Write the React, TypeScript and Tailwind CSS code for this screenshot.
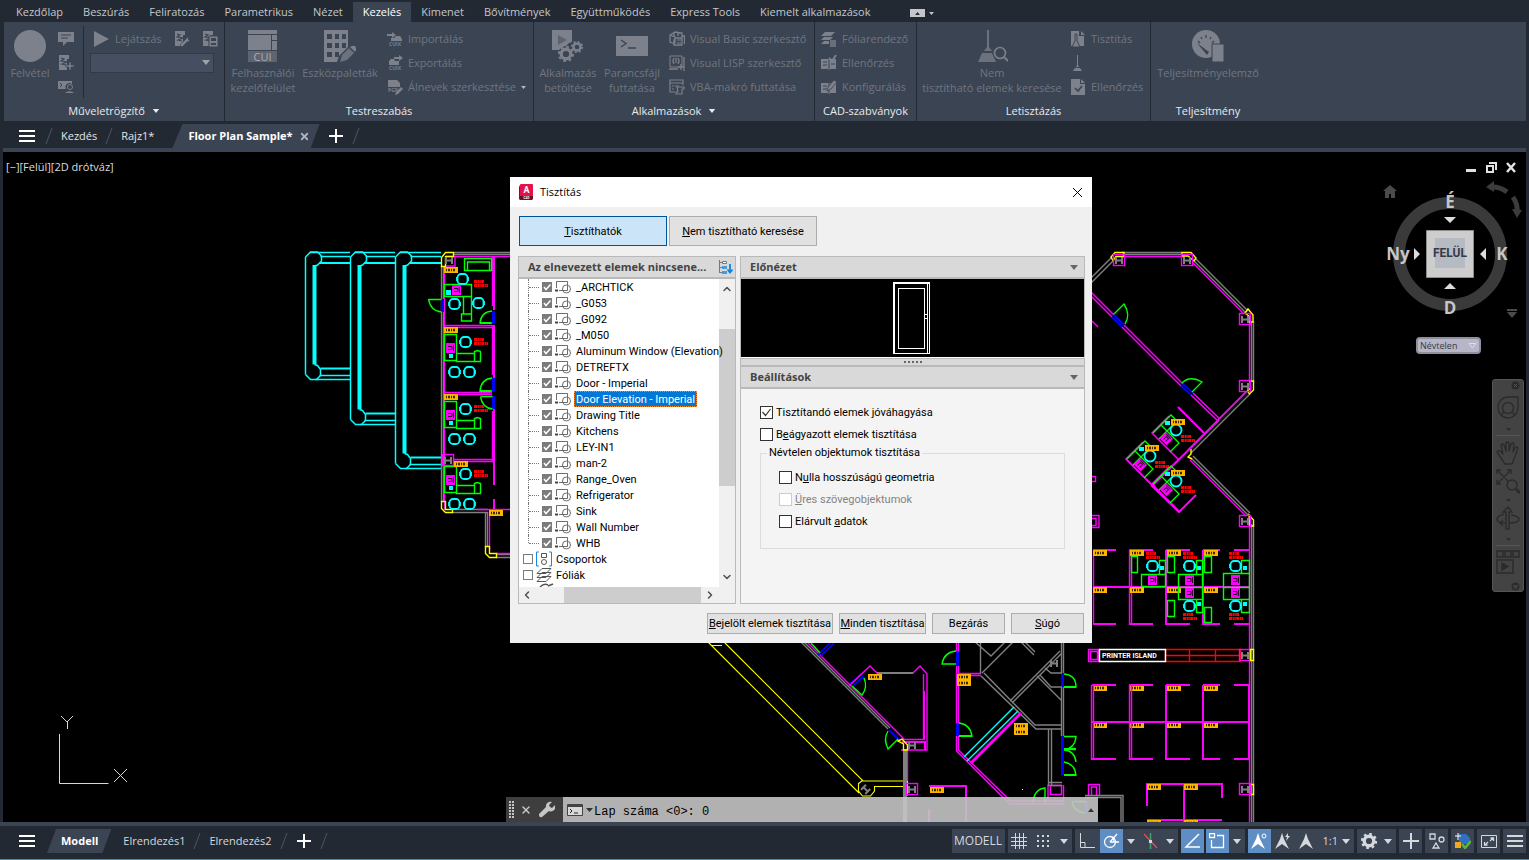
import type { ReactNode } from "react";
import { ChevronDown, ChevronLeft, ChevronRight, ChevronUp, X } from "lucide-react";

const menuTabs = [
  "Kezdőlap",
  "Beszúrás",
  "Feliratozás",
  "Parametrikus",
  "Nézet",
  "Kezelés",
  "Kimenet",
  "Bővítmények",
  "Együttműködés",
  "Express Tools",
  "Kiemelt alkalmazások",
];

const blocks = [
  "_ARCHTICK",
  "_G053",
  "_G092",
  "_M050",
  "Aluminum Window (Elevation)",
  "DETREFTX",
  "Door - Imperial",
  "Door Elevation - Imperial",
  "Drawing Title",
  "Kitchens",
  "LEY-IN1",
  "man-2",
  "Range_Oven",
  "Refrigerator",
  "Sink",
  "Wall Number",
  "WHB",
];

const M = "#ff00ff";
const G = "#00ff00";
const C = "#00ffff";
const Y = "#ffff00";
const W = "#808080";
const B = "#0000ff";

function Icon({ size = 16, children }: { size?: number; children: ReactNode }) {
  return (
    <svg
      width={size}
      height={size}
      viewBox={`0 0 ${size} ${size}`}
      fill="currentColor"
      className="shrink-0"
      aria-hidden="true"
    >
      {children}
    </svg>
  );
}

function Caret({ className = "" }: { className?: string }) {
  return (
    <svg width="8" height="5" viewBox="0 0 8 5" fill="currentColor" className={className} aria-hidden="true">
      <path d="M0 0h8L4 5z" />
    </svg>
  );
}

/* ---------- ribbon ---------- */

function BigButton({ icon, label, className = "" }: { icon: ReactNode; label: ReactNode; className?: string }) {
  return (
    <button disabled className={`flex flex-col items-center gap-[3px] pt-2 text-center ${className}`}>
      <span className="text-[#7c818b]">{icon}</span>
      <span className="leading-[15px] whitespace-nowrap">{label}</span>
    </button>
  );
}

function SmallButton({ icon, label, caret }: { icon: ReactNode; label?: string; caret?: boolean }) {
  return (
    <button disabled className="flex h-6 items-center gap-[5px] whitespace-nowrap">
      <span className="text-[#7c818b]">{icon}</span>
      {label}
      {caret && <Caret className="h-[3px] w-[5px] text-[#b4b8bf]" />}
    </button>
  );
}

function Panel({
  title,
  caret,
  className,
  children,
}: {
  title: string;
  caret?: boolean;
  className: string;
  children: ReactNode;
}) {
  return (
    <section className={`flex shrink-0 flex-col border-r border-[#222933] ${className}`}>
      <div className="flex h-[78px]">{children}</div>
      <h2 className="flex h-[21px] items-center justify-center gap-[7px] pt-px text-[#e8eaed]">
        {title}
        {caret && <Caret className="h-1 w-2" />}
      </h2>
    </section>
  );
}

const Gear = ({ x, y, r }: { x: number; y: number; r: number }) => (
  <g>
    <circle cx={x} cy={y} r={r * 0.6} fill="none" stroke="currentColor" strokeWidth={r * 0.42} />
    <circle
      cx={x}
      cy={y}
      r={r * 0.88}
      fill="none"
      stroke="currentColor"
      strokeWidth={r * 0.28}
      strokeDasharray={`${r * 0.34} ${r * 0.351}`}
    />
  </g>
);

function ScriptIcon({ kind }: { kind: "edit" | "plus" | "box" }) {
  return (
    <Icon>
      <path d="M1 0h10v4H9v11H1z" />
      <path d="M3 3l3 1-3 2 6 1-5 2 4 1" fill="none" stroke="#3b4453" strokeWidth="1.2" />
      {kind === "plus" && <path d="M8 10h3V7h2v3h3v2h-3v3h-2v-3H8z" stroke="#3b4453" strokeWidth=".6" />}
      {kind === "edit" && <path d="M6 14l6-6a3 3 0 0 1 3-2l-1 2 1 1 1-1a3 3 0 0 1-3 3l-5 5z" stroke="#3b4453" strokeWidth=".6" />}
      {kind === "box" && (
        <>
          <path d="M7 5h9v11H7z" stroke="#3b4453" />
          <path d="M9 7h5v3H9zM9 12h5v2H9z" fill="#3b4453" />
        </>
      )}
    </Icon>
  );
}

function Ribbon() {
  return (
    <div className="ml-1 mr-[3px] flex h-[99px] overflow-hidden bg-[#3b4453] text-[11px] text-[#6f7681]">
      <Panel title="Műveletrögzítő" caret className="w-[221px]">
        <div className="flex w-[79px]">
          <BigButton
            className="w-[52px]"
            icon={
              <Icon size={32}>
                <circle cx="16" cy="16" r="16" />
              </Icon>
            }
            label="Felvétel"
          />
          <div className="flex flex-col pt-[5px] pl-[2px]">
            <SmallButton
              icon={
                <Icon>
                  <path d="M0 1h16v10H9l-4 4v-4H0z" />
                  <path d="M3 4h10M3 7h7" stroke="#3b4453" />
                </Icon>
              }
            />
            <SmallButton icon={<ScriptIcon kind="plus" />} />
            <SmallButton
              icon={
                <Icon>
                  <path d="M0 2h14v3a4 4 0 0 0-6 5H0z" />
                  <path d="M2 4l2 2-2 2" fill="none" stroke="#3b4453" />
                  <circle cx="12" cy="8" r="2.5" fill="#3b4453" stroke="currentColor" />
                  <path d="M7 14a5 3 0 0 1 9 0z" />
                </Icon>
              }
            />
          </div>
        </div>
        <div className="mt-1 h-[72px] w-px bg-[#222933]" />
        <div className="flex flex-1 flex-col px-[6px] pt-[5px]">
          <div className="flex items-center justify-between pl-1">
            <SmallButton
              icon={
                <Icon>
                  <path d="M0 0l15 8L0 16z" />
                </Icon>
              }
              label="Lejátszás"
            />
            <div className="flex gap-3">
              <SmallButton icon={<ScriptIcon kind="edit" />} />
              <SmallButton icon={<ScriptIcon kind="box" />} />
            </div>
          </div>
          <div className="relative mt-[2px] mr-1">
            <select
              disabled
              aria-label="Művelet"
              className="block h-5 w-full appearance-none border border-[#313a48] bg-[#464f62] opacity-100"
            />
            <Caret className="pointer-events-none absolute top-[7px] right-1 text-[#9da2ab]" />
          </div>
        </div>
      </Panel>

      <Panel title="Testreszabás" className="w-[309px]">
        <BigButton
          className="w-[76px]"
          icon={
            <Icon size={32}>
              <path d="M1 0h29v4H1zM1 5h23v15H1zM25 5h5v5h-5zM25 11h5v9h-5z" />
              <path d="M1 21h29v11H1z" opacity=".55" />
              <text x="15.5" y="30.5" textAnchor="middle" fontSize="11" fill="#a8acb3">
                CUI
              </text>
            </Icon>
          }
          label={
            <>
              Felhasználói
              <br />
              kezelőfelület
            </>
          }
        />
        <BigButton
          className="w-[78px]"
          icon={
            <Icon size={32}>
              <path
                fillRule="evenodd"
                d="M0 0h24v17l-9 9-2 6H0zM3 4v5h5V4zm8 0v5h4V4zm7 0v5h4V4zM3 13v5h5v-5zm8 0v5h4v-5zm7 0v5h4v-5zM3 22v5h5v-5zm8 0v5h4v-5z"
              />
              <path d="M16 32l2-7 7-7 5 5-7 7z" opacity=".75" />
              <path d="M26 17l2-1a3 3 0 0 1 4 4l-1 2z" />
            </Icon>
          }
          label="Eszközpaletták"
        />
        <div className="flex flex-col pt-[5px] pl-2">
          <SmallButton
            icon={
              <Icon>
                <path d="M0 3h5V1l4 3-4 3V5H0zM4 9V7h3l2-2h4l2 3v2H4z" />
                <text x="8" y="15" textAnchor="middle" fontSize="5" fontWeight="700">
                  CUIX
                </text>
              </Icon>
            }
            label="Importálás"
          />
          <SmallButton
            icon={
              <Icon>
                <path d="M7 2h5V0l4 3-4 3V4H7zM2 10V6l2-2h3l1 2h4v4z" />
                <text x="8" y="15" textAnchor="middle" fontSize="5" fontWeight="700">
                  CUIX
                </text>
              </Icon>
            }
            label="Exportálás"
          />
          <SmallButton
            icon={
              <Icon>
                <path d="M1 1h9l3 3v4H1z" />
                <text x="6" y="13" textAnchor="middle" fontSize="5" fontWeight="700">
                  PGP
                </text>
                <path d="M8 16l1-3 5-5 2 2-5 5z" />
              </Icon>
            }
            label="Álnevek szerkesztése"
            caret
          />
        </div>
      </Panel>

      <Panel title="Alkalmazások" caret className="w-[281px]">
        <BigButton
          className="w-[68px]"
          icon={
            <Icon size={32}>
              <path d="M0 0h20v12l-3 1-3 3-4 1-3 3H0z" />
              <path d="M6 5l9 5-9 5z" fill="#5d6470" />
              <Gear x={14} y={24} r={8} />
              <Gear x={25} y={17} r={6} />
            </Icon>
          }
          label={
            <>
              Alkalmazás
              <br />
              betöltése
            </>
          }
        />
        <BigButton
          className="w-[60px]"
          icon={
            <Icon size={32}>
              <path d="M0 6h32v20H0z" />
              <path d="M5 10l5 3.500-5 3.500M12 18h8" fill="none" stroke="#3b4453" strokeWidth="1.4" />
            </Icon>
          }
          label={
            <>
              Parancsfájl
              <br />
              futtatása
            </>
          }
        />
        <div className="flex flex-col pt-[5px] pl-[7px]">
          <SmallButton
            icon={
              <Icon>
                <path
                  d="M1 4l5-3 7 1v5M1 4v7l5 2M1 4l5 2v6M5 2v3M9 1v4M7 7h6v7H5V9zM13 5h2.500v8"
                  fill="none"
                  stroke="currentColor"
                  strokeWidth="1.3"
                />
                <path d="M8 9h4M8 12h4" stroke="currentColor" />
              </Icon>
            }
            label="Visual Basic szerkesztő"
          />
          <SmallButton
            icon={
              <Icon>
                <path d="M1 1h12v11H1z" fill="none" stroke="currentColor" />
                <path
                  d="M5 3q-2 3 0 6M9 3q2 3 0 6M7 3v5M15 2v14M0 14h9M12 9v6M9 12h6"
                  fill="none"
                  stroke="currentColor"
                  strokeWidth="1.3"
                />
              </Icon>
            }
            label="Visual LISP szerkesztő"
          />
          <SmallButton
            icon={
              <Icon>
                <path d="M1 1h13v3H1zM1 4v9h5M14 4v2" fill="none" stroke="currentColor" strokeWidth="1.2" />
                <path d="M3 7h2M6 7h4M3 10h2" stroke="currentColor" />
                <path d="M8 8h7v2h-2v5H7v-2h2z" fill="none" stroke="currentColor" strokeWidth="1.2" />
              </Icon>
            }
            label="VBA-makró futtatása"
          />
        </div>
      </Panel>

      <Panel title="CAD-szabványok" className="w-[102px]">
        <div className="flex flex-col pt-[5px] pl-[6px]">
          <SmallButton
            icon={
              <Icon>
                <path d="M4 1h10l-4 4H0zM3 6h9l-3 3H0zM3 10h5v3H0z" />
                <path d="M9 9h6v7H9z" opacity=".7" />
              </Icon>
            }
            label="Fóliarendező"
          />
          <SmallButton
            icon={
              <Icon>
                <path d="M0 4h7l1 1 1-1h6v10H9l-1 1-1-1H0z" />
                <path d="M8 5v9M2 7h4M2 10h4M10 9h4" stroke="#3b4453" />
                <path d="M8 3l3 3 4-6" fill="none" stroke="currentColor" strokeWidth="2" />
              </Icon>
            }
            label="Ellenőrzés"
          />
          <SmallButton
            icon={
              <Icon>
                <path d="M0 4h7l1 1 1-1h6v10H9l-1 1-1-1H0z" />
                <path d="M8 5v9M2 7h4M2 10h4" stroke="#3b4453" />
                <path d="M6 12l1-4 6-7 3 2-6 7z" stroke="#3b4453" strokeWidth=".8" />
              </Icon>
            }
            label="Konfigurálás"
          />
        </div>
      </Panel>

      <Panel title="Letisztázás" className="w-[234px]">
        <BigButton
          className="w-[150px]"
          icon={
            <Icon size={32}>
              <path d="M11 0h2v17l3 4H8l3-4zM6 23h10l4 9H2z" opacity=".75" />
              <circle cx="24" cy="23" r="5.500" fill="#3b4453" stroke="currentColor" strokeWidth="1.6" />
              <path d="M28 27l4 4" stroke="currentColor" strokeWidth="2" />
            </Icon>
          }
          label={
            <>
              Nem
              <br />
              tisztítható elemek keresése
            </>
          }
        />
        <div className="flex flex-col pt-[5px] pl-[3px]">
          <SmallButton
            icon={
              <Icon>
                <path d="M1 0h8v5h5v10H1zM11 0l4 4h-4z" />
                <path d="M5 3h2v7l3 6H2l3-6z" stroke="#3b4453" />
              </Icon>
            }
            label="Tisztítás"
          />
          <SmallButton
            icon={
              <Icon>
                <path d="M7 0h1v10l1 2H6l1-2zM5 13h5l2 3H3z" />
              </Icon>
            }
          />
          <SmallButton
            icon={
              <Icon>
                <path d="M1 0h9v5h5v11H1zM11 0l4 4h-4z" />
                <path d="M5 9l3 3 4-5" fill="none" stroke="#3b4453" strokeWidth="1.6" />
              </Icon>
            }
            label="Ellenőrzés"
          />
        </div>
      </Panel>

      <Panel title="Teljesítmény" className="w-[115px] border-transparent">
        <BigButton
          className="w-[114px]"
          icon={
            <Icon size={32}>
              <circle cx="14" cy="14" r="14" />
              <path d="M14 5v3M6 11l2 2M22 11l-2 2M9 7l1 2M19 7l-1 2" stroke="#3b4453" strokeWidth="1.2" />
              <path d="M5 13l12 9-2 3z" fill="#3b4453" />
              <path d="M20 14h12v18H20z" stroke="#3b4453" />
            </Icon>
          }
          label="Teljesítményelemző"
        />
      </Panel>
    </div>
  );
}

/* ---------- floor plan ---------- */

const Line = ({ d, c, w = 1.4 }: { d: string; c: string; w?: number }) => (
  <path d={d} stroke={c} strokeWidth={w} fill="none" />
);

const Tag = ({ x, y, rows = 1 }: { x: number; y: number; rows?: number }) => (
  <g>
    <rect x={x} y={y} width="14" height={rows * 6} fill="#ffb400" />
    {Array.from({ length: rows }, (_, i) => (
      <path
        key={i}
        d={`M${x + 2} ${y + 3 + i * 6}h10`}
        stroke="#3a2a00"
        strokeWidth="2.500"
        strokeDasharray="1 1 2 1"
      />
    ))}
  </g>
);

const Chair = ({ x, y }: { x: number; y: number }) => (
  <g fill="none" stroke={C} strokeWidth="1.800">
    <rect x={x - 4.5} y={y - 5} width="10" height="10" rx="3.500" />
    <path d={`M${x - 5} ${y - 2}v4M${x + 6} ${y - 2}v4`} />
  </g>
);

const Note = ({ x, y }: { x: number; y: number }) => (
  <path
    d={`M${x} ${y + 1.5}h10M${x} ${y + 5.5}h14`}
    stroke="#ff0000"
    strokeWidth="2.800"
    strokeDasharray="3 .5 2 .3 1 .4"
  />
);

const Computer = ({ x, y }: { x: number; y: number }) => (
  <g>
    <rect x={x} y={y} width="9" height="10" fill={M} />
    <path d={`M${x + 2} ${y + 6.5}h4v-3h-4M${x + 7.5} ${y + 2}v6`} stroke="#300030" fill="none" />
  </g>
);

const Column = ({ x, y, box = true }: { x: number; y: number; box?: boolean }) => (
  <g>
    {box && <rect x={x - 5.5} y={y - 5.5} width="11" height="11" fill="none" stroke={M} strokeWidth="1.400" />}
    <path d={`M${x - 3} ${y - 3}v7M${x + 3} ${y - 3}v7M${x - 3} ${y + 0.5}h6`} stroke={W} strokeWidth="2" />
  </g>
);

const Canopy = ({ x, bottom, end }: { x: number; bottom: number; end: number }) => (
  <g fill="none" stroke={C} strokeWidth="1.500">
    <path d={`M${x + 4} 252.500h${end - x - 4}M${x + 15} 256.500h${end - x - 15}`} />
    <path d={`M${x + 14} 263h${end - x - 14}`} strokeWidth="2" />
    <path d={`M${x} 257v${bottom - 262}M${x} 257l5-5h7l4 4v5l-4 4-3 1`} />
    <path d={`M${x + 9} 265v${bottom - 280}`} strokeWidth="4" />
    <path d={`M${x + 9} ${bottom - 15}l3 1 3 4v6l-4 4h-6l-5-5`} />
    <path d={`M${x + 15} ${bottom - 11}h${end - x - 15}`} strokeWidth="2" />
    <path d={`M${x + 14} ${bottom - 4}h${end - x - 14}M${x + 10} ${bottom}h${end - x - 10}`} />
  </g>
);

function Office({ dy }: { dy: number }) {
  return (
    <g transform={`translate(0 ${dy})`}>
      <Line c={G} d="M444.500 334.500h12v26h-12zM456.500 353.500h18v8h-18zM474.500 351.500l3-1 3 1v10h-6z" />
      <Computer x={446} y={343} />
      <path d="M449 354h4v4h-4z" fill={C} />
      <Chair x={465} y={342} />
      <Chair x={454} y={372} />
      <Chair x={469} y={372} />
      <Note x={474} y={338} />
    </g>
  );
}

function Cubicle({ dx, dy }: { dx: number; dy: number }) {
  return (
    <g transform={`translate(${dx} ${dy})`}>
      <Line c={M} w={1.5} d="M1169 416l-17 17 27 27" />
      <Line c={G} d="M1153 433l18-18 6 6-18 18M1161 425l9 9 9 9-9 9" />
      <g transform="rotate(-45 1166 439)">
        <Computer x={1162} y={434} />
      </g>
      <path d="M1165 421h5v4h-5z" fill={C} />
      <circle cx="1176" cy="430" r="5.500" stroke={C} strokeWidth="1.800" fill="none" />
      <Tag x={1171} y={419} />
      <Note x={1181} y={435} />
    </g>
  );
}

function FloorPlan() {
  return (
    <svg
      viewBox="3 152 1523 670"
      preserveAspectRatio="xMidYMid slice"
      className="absolute inset-0 size-full"
      role="img"
      aria-label="Floor Plan Sample"
    >
      <Canopy x={305.5} bottom={379.5} end={350} />
      <Canopy x={350.5} bottom={424.5} end={395} />
      <Canopy x={395.5} bottom={468.5} end={441} />

      {/* west offices */}
      <Line c={W} d="M441.500 266v236M443.500 266v236M454 252.500h60M454 254.500h60M452 509.500h36M452 512.500h36M485.500 512v35M487.500 512v35M496 554.500h20M496 557.500h20" />
      <Line c={M} d="M444.500 266v244M446 256.500h64M444 325.500h48M444 327.500h48M444 392.500h48M444 394.500h48M454 459.500h38M454 461.500h40M489.500 512v38M496 553.500h20M478 509.500h34M455 256v10h-10" />
      <Line c={M} d="M492.500 256v50M492.500 325v50M492.500 411v50" />
      <Line c={M} w={2} d="M494 256v54M494 325v53M494 409v76M494 499v12" />
      <Line c={B} w={3} d="M493.500 311v13M493.500 378v14M493.500 396v13M442.500 299v13" />
      <Line c={Y} d="M441.500 266.500v-9l4-5h8v4h-8v10zM441.500 501.500v7l4 4h7v-3h-7v-8zM485.500 546.500v7l4 4h7v-4h-7v-7z" />
      <Column x={449} y={260} box={false} />
      <Column x={448} y={460} />
      <Line c={G} d="M464.500 258.500h27v12h-27zM467.500 270v-8h22v8M444.500 284.500h27v12h-27zM463.500 296v18M471.500 296v25h-10v-7h10" />
      <Line c={G} d="M492 311q-11 1-12 12h12M428.500 299.500h13M428.500 299q2 12 13 13M492 378q-11 1-12 13h12M480.500 396.500h12M480.500 397q2 11 12 12" />
      <Line c={G} w={2} d="M480 323h11M480 391h11" />
      <Computer x={452} y={285} />
      <path d="M446 290h5v5h-5z" fill={C} />
      <Chair x={462} y={279} />
      <Chair x={454} y={304} />
      <Chair x={478} y={303} />
      <Note x={474} y={280} />
      <Office dy={0} />
      <Office dy={67} />
      <Office dy={132} />
      <Tag x={444} y={267} />
      <Tag x={444} y={327} />
      <Tag x={444} y={394} />
      <Tag x={454} y={461} />
      <Tag x={489} y={510} />

      {/* north-east wing */}
      <Line c={W} d="M1122 252.500h60M1122 254.500h60M1112 257l-24 24M1114 260l-24 24M1196 259l52 52M1194 261l52 52M1251.500 321v61M1253.500 321v61M1250 394l-59 59M1247 391l-59 59M1193 456l57 57M1191 458l57 57M1251.500 524v300M1253.500 524v300" />
      <Line c={M} d="M1122 256.500h62M1193 263l51 51M1249.500 322v60M1246 392l-27 27M1190 460l56 56M1249.500 526v298" />
      <Line c={M} d="M1088 289l26 26M1086 291l26 26M1124 325l59 59M1122 327l59 59M1193 393l27 26M1191 395l27 26M1092 321l6 6" />
      <Line c={B} w={1.8} d="M1114 315l10 10M1112 317l10 10M1183 384l10 9M1181 386l10 9" />
      <Line c={G} d="M1114 314l10-10q7 11 1 20M1182 383q8-8 20-1l-10 10" />
      <Line c={Y} d="M1111 257l4-4.500h9v4h-8l-3 4zM1182 252.500h9l5 5.500-2 3-6-5h-6zM1245 313l3-4 5 6v7h-4v-6zM1250 381h3.500v9l-4 4-2-3 3-3zM1191 449v5l-3 3 4 2M1249 515l4.500 5v6h-4z" />
      <Column x={1119} y={260} />
      <Column x={1187} y={260} />
      <Column x={1245} y={319} />
      <Column x={1245} y={386} />
      <Column x={1245} y={521} />
      <Line c={M} w={2} d="M1178 407l26 26M1219 420l-67 66 27 26 17-17" />
      <Line c={M} w={1.5} d="M1126 459l28 28" />
      <Cubicle dx={0} dy={0} />
      <Cubicle dx={-26} dy={26} />
      <Cubicle dx={0} dy={51} />

      {/* east workstations */}
      <Line c={M} w={2} d="M1093 550h23M1129 550h24M1166 550h24M1203 550h17M1234 550h15M1093 587h156M1166 550v75M1203 550v75M1093 624h23M1129 624h24M1166 624h24M1203 624h17M1234 624h15" />
      <Line c={M} d="M1093.500 550v75M1129.500 550v75M1131.500 550v75M1088.500 476.500h7v5h-7M1088 515.500h11v12h-11M1088 518.500h8v7h-8" />
      {[1093, 1130, 1167, 1204].map((x) => (
        <g key={x}>
          <Tag x={x} y={550} />
          <Tag x={x} y={587} />
          <Tag x={x} y={685} />
          <Tag x={x} y={722} />
        </g>
      ))}
      <Line
        c={G}
        d="M1131.500 556.500h6v16h-6zM1141.500 574.500h24v12h-24zM1159.500 560.500h6v14h-6zM1167.500 556.500h7v16h-7zM1178.500 574.500h24v25h-24zM1178 587.500h25M1196.500 560.500h6v14h-6zM1167.500 600.500h7v16h-7zM1196.500 599.500h6v13h-6zM1204.500 556.500h7v16h-7zM1223.500 573.500h26v26h-26zM1223 587.500h26M1241.500 560.500h8v13h-8zM1204.500 607.500h7v15h-7zM1241.500 599.500h8v13h-8z"
      />
      {[
        [1152, 566],
        [1189, 566],
        [1235, 566],
        [1189, 606],
        [1235, 606],
      ].map(([x, y]) => (
        <g key={`${x}-${y}`}>
          <Chair x={x} y={y} />
          <Computer x={x - 4} y={y > 580 ? y - 18 : y + 9} />
          <path d={`M${x + 8} ${y > 580 ? y - 4 : y}h4v4h-4z`} fill={C} />
          <Note x={x - 6} y={y > 580 ? y + 7 : y - 14} />
        </g>
      ))}

      <Line c={M} d="M1088.500 649.500h10v12h-10zM1090.500 651.500h7v8h-7z" />
      <Line c="#ff0000" d="M1165.500 649.500h75v12h-75zM1165 655.500h75M1189.500 650v12M1215.500 650v12" />
      <Line c="#ffffff" d="M1099.500 649.500h66v12h-66z" />
      <text x="1102" y="658" fontSize="7" fill="#fff" fontFamily="Roboto, sans-serif" fontWeight="700">
        PRINTER ISLAND
      </text>
      <Column x={1245} y={655} />
      <Line c={Y} d="M1250.500 649.500h3v11h-3zM1250.500 784.500h3v10h-3z" />

      <Line c={M} w={2} d="M1092 685h24M1129 685h24M1166 685h24M1203 685h17M1234 685h15M1092 722h157M1092 759h24M1129 759h24M1166 759h24M1203 759h17M1234 759h15M1166 685v75M1203 685v75M1249 685v75" />
      <Line c={M} d="M1091.500 685v75M1093.500 685v75M1129.500 685v75M1131.500 685v75M1088.500 784.500h11v11M1088.500 784v11M1091.500 795v-8h5v8" />
      <Line c={M} w={2} d="M1147 806v-22h75v14M1184 784v38M1147 820h75" />
      <Tag x={1147} y={784} />
      <Tag x={1184} y={784} />
      <Tag x={1147} y={820} />
      <Tag x={1184} y={820} />
      <Column x={1245} y={789} />
      <Line c={W} d="M1085 795.500h38v28M1085 797.500h36v26" />

      {/* south entrance */}
      <Line c={Y} w={1.1} d="M706 640l153 153M719 637l144 144h44M858.500 784v7l4 5h8l4-5v-4.500h29M858 784l5-4M903.500 786v9h4v-14M711 645.500h11" />
      <g transform="rotate(45 866 789)">
        <Column x={866} y={789} box={false} />
      </g>
      <Line c={W} d="M800 641l88 88M803 641l87 87" />
      <Line c={M} d="M806 641l98 98" />
      <Line c={B} w={1.8} d="M818 655l13-13M821 656l13-13M850 684l11-10M852 687l12-11M889 730l10 10" />
      <Line c={G} d="M811 643l9 10M852 686l10 9q6-8 2-17M888 731q-5 8 0 18l10-10" />
      <Line c={M} d="M849 686l21-20 7 7h36l7-7 7 8v76h-26M902 739.500h23M923.500 674v65M907.500 750v31" />
      <Line c={M} w={2} d="M902 742h23v8M924 691v48" />
      <Line c={W} w={2} d="M877 673h36" />
      <Line c={W} w={4} d="M905 750v72" />
      <Line c={Y} d="M898 741l4-2 5.500 6v5h-4v-6z" />
      <Column x={912} y={745} box={false} />
      <Column x={912} y={789} />
      <Line c={M} w={2} d="M929 786h37v36M929 822v-13" />
      <Tag x={868} y={674} />
      <Tag x={930} y={787} />

      <Line c={M} d="M956.500 643v8M958.500 643v8M956.500 666v57M958.500 666v57M958 673.500h23M958 675.500h23M956.500 736v15l53 53h54M958.500 736v14l52 51h53M1048 784.500v17M1050.500 785.500h11v9h-11zM1063.500 785v18" />
      <Line c={B} w={3} d="M957.500 651v15M957.500 723v13M1062.500 673v14M1062.500 736v39M1086.500 801v12" />
      <Line c={G} d="M956 651q-12 1-14 13h14M959 723q11 1 13 13h-13M1064 674q12 1 12 13h-12M1064 736.500h12q-1 12-12 13h12M1064 750q11 1 12 12M1064 762q11 2 12 13h-12M1033 803q1-14 12-15v15M1072.500 801.500h14M1072 802q2 10 13 11" />
      <Line c={G} w={2} d="M959 736h13M1064 687h12M1064 749h12M1064 775h12" />
      <Line c={W} d="M980.500 643v31M974 641l17 15 15-15M982 673l32-32M981 676l55 53h26M984 673l51 52h27M1010 701l50-50M1012 703l50-50M1020 641l14 14M1023 640l12 12M1037 676l25 25M1045 668l6 5h11M1040 675l11 12h11M1061.500 643v30M1063.500 643v30M1061.500 687v49M1063.500 687v49M1048.500 729v56M1051.500 729v56M1048 782.500h14M1048 785.500h14" />
      <Column x={1054} y={663} box={false} />
      <Line c={C} d="M1014 707l-50 50M1018 711l-51 50" />
      <Line c={M} w={3} d="M1021 713l-50 50" />
      <Tag x={957} y={674} rows={2} />
      <Tag x={1014} y={723} rows={2} />
      <path d="M1022 789h1v1h-1z" fill="#fff" />

      {/* UCS icon */}
      <Line c="#d8d8d8" w={1} d="M59.500 734v49.500h49M61 716l6 6 6-6M67.500 722v7M114 769l13 13M127 769l-13 13" />
    </svg>
  );
}

/* ---------- view controls ---------- */

function ViewCube() {
  return (
    <svg
      width="150"
      height="140"
      viewBox="1376 180 150 140"
      className="absolute top-7 right-0"
      fontFamily="Open Sans, sans-serif"
      fontWeight="700"
      textAnchor="middle"
      aria-label="ViewCube"
    >
      <circle cx="1450" cy="254" r="51" fill="none" stroke="#3a3a3a" strokeWidth="12" />
      <path d="M1383 191l7-6 7 6h-2v7h-4v-4h-2v4h-4v-7z" fill="#4a4a4a" />
      <g fill="none" stroke="#3c3c3c" strokeWidth="5">
        <path d="M1492 187q9 0 15 5M1513 197q5 8 4 14" />
      </g>
      <path d="M1486 187l8-6v11zM1512 209l10 1-5 8z" fill="#3c3c3c" />
      <path d="M1507 309h10v2h-10zM1507 312h10l-5 6z" fill="#4a4a4a" />
      <path d="M1426.500 230.500h47v47h-47z" fill="#cdcdcd" stroke="#8e8e8e" />
      <path d="M1435 238h30v30h-30z" fill="#b5bac3" />
      <path d="M1444 217h12l-6 6zM1444 289h12l-6-6zM1414 248v12l6-6zM1486 248v12l-6-6z" fill="#dcdcdc" />
      <text x="1450" y="257" fontSize="12" fill="#353c48" fontFamily="Roboto, sans-serif">
        FELÜL
      </text>
      <g fontSize="17" fill="#c6c6c6">
        <text x="1450" y="208">É</text>
        <text x="1450" y="314">D</text>
        <text x="1398" y="260">Ny</text>
        <text x="1502" y="260">K</text>
      </g>
    </svg>
  );
}

function NavBar() {
  const down = <Caret className="mx-auto h-[3px] w-[5px]" />;
  return (
    <div className="absolute top-[227px] right-[2px] flex h-[213px] w-8 flex-col items-center rounded-[3px] border border-[#555] bg-[#434343] px-[3px] text-[#2b2b2b]">
      <button aria-label="Bezárás" className="flex h-[10px] w-full items-center justify-end">
        <Icon size={9}>
          <circle cx="4.500" cy="4.500" r="4" />
          <path d="M3 3l3 3M6 3L3 6" stroke="#555" />
        </Icon>
      </button>
      <button aria-label="Kormányok" className="flex h-[46px] w-full flex-col items-center justify-end gap-2 border-b border-[#555] pb-1">
        <svg width="24" height="24" viewBox="0 0 24 24" fill="none" stroke="currentColor" strokeWidth="1.4">
          <path d="M12 1h10v11a10 10.500 0 1 1-10-11z" />
          <circle cx="12" cy="12" r="5.500" />
          <path d="M5 19l3-3M16 16l3 3" />
        </svg>
        {down}
      </button>
      <button aria-label="Mozgatás" className="mt-1">
        <svg width="24" height="25" viewBox="0 0 24 25" fill="none" stroke="currentColor" strokeWidth="1.4" strokeLinejoin="round">
          <path d="M9 24l-4-6-4-6q1-2 3-1l3 3-2-9q2-2 3 0l2 6V3q1-2 3 0v8l2-7q2-2 3 0l-1 8 2-4q2-2 3 0l-4 11-2 5z" />
        </svg>
      </button>
      <button aria-label="Zoom" className="mt-1 flex flex-col items-center gap-[5px]">
        <svg width="24" height="25" viewBox="0 0 24 25" fill="none" stroke="currentColor" strokeWidth="1.4">
          <path d="M1 1l14 14M15 1L1 15M1 5V1h4M11 1h4v4M1 11v4h4" />
          <circle cx="16" cy="16" r="5" fill="#434343" />
          <path d="M20 20l4 4" strokeWidth="3" />
        </svg>
        {down}
      </button>
      <button aria-label="Keringés" className="mt-1 flex w-full flex-col items-center gap-2 border-b border-[#555] pb-1">
        <svg width="24" height="24" viewBox="0 0 24 24" fill="none" stroke="currentColor" strokeWidth="1.4">
          <path d="M10 23V6H7l5-5 4 5h-3v17zM8 8q-7 2-7 5 0 4 8 4M15 9q8 1 8 4 0 4-10 4M7 14l-3 3 3 3" />
        </svg>
        {down}
      </button>
      <button aria-label="ShowMotion" className="mt-1">
        <svg width="24" height="24" viewBox="0 0 24 24" fill="none" stroke="currentColor" strokeWidth="1.4">
          <path d="M1 1h6v6H1zM9 1h6v6H9zM17 1h6v6h-6zM1 10h16v13H1z" />
          <path d="M6 13v7l6-3.500z" fill="currentColor" />
        </svg>
      </button>
      <button aria-label="Testreszabás" className="mt-auto flex w-full justify-end">
        <Icon size={9}>
          <circle cx="4.500" cy="4.500" r="4" />
          <path d="M2 4h5M3 6h3" stroke="#555" />
        </Icon>
      </button>
    </div>
  );
}

/* ---------- purge dialog ---------- */

const BlockIcon = () => (
  <svg width="17" height="14" viewBox="0 0 17 14" fill="none" stroke="#6d6d6d" className="ml-[3px] shrink-0" aria-hidden="true">
    <path d="M1.500 8V1.500h11V6M4 10.500h6" />
    <circle cx="11.500" cy="9" r="4" />
    <path d="M12.500 6v4.500H7" />
    <path d="M0 9.500h3v2H0z" fill="#444" stroke="none" />
  </svg>
);

function TreeCheck({ id, checked }: { id: string; checked?: boolean }) {
  return (
    <span className="relative size-[10px] shrink-0">
      <input
        id={id}
        type="checkbox"
        defaultChecked={checked}
        className="peer block size-[10px] appearance-none border border-[#7b7b7b] bg-white checked:bg-[#7b7b7b]"
      />
      <svg viewBox="0 0 10 10" className="pointer-events-none absolute inset-0 hidden peer-checked:block">
        <path d="M2 5l2 2.500L8.500 2.500" stroke="#fff" strokeWidth="1.500" fill="none" />
      </svg>
    </span>
  );
}

function Option({
  id,
  checked,
  disabled,
  children,
}: {
  id: string;
  checked?: boolean;
  disabled?: boolean;
  children: ReactNode;
}) {
  return (
    <div className="flex h-[22px] items-center gap-[3px]">
      <span className="relative size-[13px]">
        <input
          id={id}
          type="checkbox"
          defaultChecked={checked}
          disabled={disabled}
          className="peer block size-[13px] appearance-none border border-[#333] bg-white disabled:border-[#ccc]"
        />
        <svg viewBox="0 0 13 13" className="pointer-events-none absolute inset-0 hidden peer-checked:block">
          <path d="M2.500 6l3 3.500 5-6.500" stroke="#333" strokeWidth="1.200" fill="none" />
        </svg>
      </span>
      <label htmlFor={id} className={disabled ? "pt-[2px] text-[#838383]" : "pt-[2px]"}>
        {children}
      </label>
    </div>
  );
}

const PaneTitle = ({ children, icon }: { children: ReactNode; icon: ReactNode }) => (
  <h3 className="flex h-[22px] shrink-0 items-center justify-between border border-[#b9b9b9] bg-[#d9d9d9] pr-[6px] pl-[9px] font-['Open_Sans',sans-serif] text-[11px] font-bold whitespace-nowrap text-[#444]">
    <span>{children}</span>
    {icon}
  </h3>
);

const dlgButton = "h-[21px] border border-[#adadad] bg-[#e1e1e1] pt-[2px] whitespace-nowrap";

function PurgeDialog() {
  return (
    <div
      role="dialog"
      aria-label="Tisztítás"
      className="absolute top-[25px] left-[507px] w-[582px] bg-[#f0f0f0] font-[Roboto,sans-serif] text-[11px] text-black"
    >
      <header className="flex h-[30px] items-center gap-[6px] bg-white pl-[9px]">
        <svg width="15" height="16" viewBox="0 0 15 16" aria-hidden="true">
          <path d="M2 0h11a1 1 0 0 1 1 1v11H1V1a1 1 0 0 1 1-1z" fill="#e51050" />
          <path d="M1 1L0 3v12l1 1z" fill="#80102f" />
          <path d="M1 12h13v3l-1 1H1z" fill="#700f2a" />
          <text x="7.500" y="9" textAnchor="middle" fontSize="9" fontWeight="700" fill="#fff">
            A
          </text>
          <text x="7.500" y="15" textAnchor="middle" fontSize="3" fontWeight="700" fill="#fff">
            CAD
          </text>
        </svg>
        <h2 className="flex-1 font-['Open_Sans',sans-serif]">Tisztítás</h2>
        <button aria-label="Bezárás" className="grid h-full w-[30px] place-items-center">
          <X size={17} strokeWidth={1.4} />
        </button>
      </header>

      <div className="flex gap-[2px] px-[9px] pt-[9px]">
        <button className="h-[30px] w-[148px] border border-[#005499] bg-[#cce4f7] pt-[2px]">
          <u>T</u>isztíthatók
        </button>
        <button className="h-[30px] w-[148px] border border-[#adadad] bg-[#e1e1e1] pt-[2px]">
          <u>N</u>em tisztítható keresése
        </button>
      </div>

      <div className="flex gap-1 pt-[10px] pr-[7px] pl-2">
        <section className="flex h-[348px] w-[218px] flex-col">
          <PaneTitle
            icon={
              <svg width="15" height="15" viewBox="0 0 15 15" className="-mr-1 shrink-0" aria-hidden="true">
                <path d="M1.500 0v13M2 2.500h2M2 7.500h2M2 12.500h2" stroke="#777" fill="none" />
                <path d="M4.500 1.500h4v2h-4z" stroke="#777" fill="#fff" />
                <path d="M4 6h5v3H4zM4 11h5v3H4z" fill="#4b9bd8" />
                <path d="M12 4v8M9.500 9.500l2.500 3 2.500-3" stroke="#0f86e0" strokeWidth="1.800" fill="none" />
              </svg>
            }
          >
            Az elnevezett elemek nincsene...
          </PaneTitle>
          <div className="flex min-h-0 flex-1 flex-col border border-[#b9b9b9] bg-[#f0f0f0]">
            <div className="flex min-h-0 flex-1">
              <ul className="relative z-10 h-[308px] min-w-0 flex-1 overflow-y-clip bg-white">
                {blocks.map((name, i) => (
                  <li key={name} className="flex h-4 items-center">
                    <span
                      className={
                        i === blocks.length - 1
                          ? "ml-[9px] h-2 shrink-0 self-start border-l border-dotted border-[#777]"
                          : "ml-[9px] h-4 shrink-0 border-l border-dotted border-[#777]"
                      }
                    />
                    <span className="mr-[3px] w-[10px] shrink-0 border-t border-dotted border-[#777]" />
                    <TreeCheck id={`block-${i}`} checked />
                    <BlockIcon />
                    <label
                      htmlFor={`block-${i}`}
                      className={
                        name === "Door Elevation - Imperial"
                          ? "ml-[2px] h-4 shrink-0 border border-dotted border-[#ff8728] bg-[#0078d7] px-px leading-4 whitespace-nowrap text-white"
                          : "ml-1 shrink-0 pt-[2px] whitespace-nowrap"
                      }
                    >
                      {name}
                    </label>
                  </li>
                ))}
                <li className="flex h-4 items-center pl-1">
                  <TreeCheck id="groups" />
                  <svg width="16" height="16" viewBox="0 0 16 16" fill="none" className="mr-1 ml-[3px]" aria-hidden="true">
                    <path d="M3 1H.5v14H3M13 1h2.500v14H13" stroke="#1a8ad8" />
                    <path d="M5.500 2.500h5v4h-5z" stroke="#555" />
                    <circle cx="8" cy="11" r="2.500" stroke="#555" />
                  </svg>
                  <label htmlFor="groups" className="pt-[2px]">
                    Csoportok
                  </label>
                </li>
                <li className="flex h-4 items-center pl-1">
                  <TreeCheck id="layers" />
                  <svg width="16" height="16" viewBox="0 0 16 16" fill="#fff" stroke="#555" className="mr-1 ml-[3px]" aria-hidden="true">
                    <path d="M1 14.500h9l5-5H6zM1 10.500h9l5-5H6zM1 6.500h9l5-5H6z" />
                  </svg>
                  <label htmlFor="layers" className="pt-[2px]">
                    Fóliák
                  </label>
                </li>
                <li className="flex h-4 pl-[20px]">
                  <svg width="16" height="16" viewBox="0 0 16 16" fill="none" stroke="#555" strokeWidth="1.500" aria-hidden="true">
                    <path d="M1 4q4-4 8-2M9 3l5-2" />
                  </svg>
                </li>
              </ul>
              <div className="flex w-4 shrink-0 flex-col items-center justify-between py-1 text-[#505050]">
                <ChevronUp size={12} strokeWidth={3} />
                <div className="mt-[34px] mb-auto h-[157px] w-full bg-[#cdcdcd]" />
                <ChevronDown size={12} strokeWidth={3} />
              </div>
            </div>
            <div className="flex h-4 items-center pr-[19px] pl-[2px] text-[#505050]">
              <ChevronLeft size={12} strokeWidth={3} />
              <div className="mr-auto ml-[31px] h-full w-[137px] bg-[#cdcdcd]" />
              <ChevronRight size={12} strokeWidth={3} />
            </div>
          </div>
        </section>

        <section className="flex h-[348px] flex-1 flex-col">
          <PaneTitle icon={<Caret className="text-[#666]" />}>Előnézet</PaneTitle>
          <div className="flex h-[80px] justify-center border border-[#b9b9b9] border-b-white bg-black pt-[3px] pr-[2px]">
            <svg width="37" height="72" viewBox="0 0 37 72" fill="none" stroke="#fff" shapeRendering="crispEdges" aria-hidden="true">
              <path d="M1 .5h35.500v71H1zM0 1.500h36M34.500 1v70M5.500 6.500h26v60h-26z" />
              <path d="M1 0v72" strokeWidth="2" />
              <path d="M32 32.500h3M32 36.500h2" />
            </svg>
          </div>
          <div className="flex h-2 items-center justify-center gap-[2px] border border-[#b9b9b9] bg-[#d9d9d9]">
            {[0, 1, 2, 3, 4].map((n) => (
              <span key={n} className="size-[2px] bg-[#666]" />
            ))}
          </div>
          <PaneTitle icon={<Caret className="text-[#666]" />}>Beállítások</PaneTitle>
          <div className="flex-1 border border-[#b9b9b9] bg-[#f4f4f4] px-[19px] pt-3">
            <Option id="confirm" checked>
              Tisztítandó elemek <u>j</u>óváhagyása
            </Option>
            <Option id="nested">
              B<u>e</u>ágyazott elemek tisztítása
            </Option>
            <fieldset className="border border-[#dcdcdc] px-[18px] pb-4">
              <legend className="-ml-[12px] px-[2px] leading-4">Névtelen objektumok tisztítása</legend>
              <div className="pt-[5px]">
                <Option id="zero">
                  N<u>u</u>lla hosszúságú geometria
                </Option>
                <Option id="empty" disabled>
                  <u>Ü</u>res szövegobjektumok
                </Option>
                <Option id="orphan">
                  Elárvult <u>a</u>datok
                </Option>
              </div>
            </fieldset>
          </div>
        </section>
      </div>

      <footer className="flex justify-end gap-[6px] pt-[9px] pr-2 pb-[9px]">
        <button className={`${dlgButton} w-[126px]`}>
          <u>B</u>ejelölt elemek tisztítása
        </button>
        <button className={`${dlgButton} w-[87px]`}>
          <u>M</u>inden tisztítása
        </button>
        <button className={`${dlgButton} w-[73px]`}>
          Be<u>z</u>árás
        </button>
        <button className={`${dlgButton} w-[73px]`}>
          <u>S</u>úgó
        </button>
      </footer>
    </div>
  );
}

/* ---------- status bar ---------- */

function Toggle({
  label,
  on,
  children,
  className = "w-[23px]",
}: {
  label: string;
  on?: boolean;
  children: ReactNode;
  className?: string;
}) {
  return (
    <button
      aria-label={label}
      aria-pressed={on}
      className={`flex h-6 items-center justify-center ${on ? "bg-[#5e8ec4] text-white" : ""} ${className}`}
    >
      {children}
    </button>
  );
}

const Group = ({ children }: { children: ReactNode }) => (
  <div className="flex h-6 shrink-0 items-center bg-[#3b4453]">{children}</div>
);

const Menu = ({ label }: { label: string }) => (
  <Toggle label={label} className="w-4">
    <Caret />
  </Toggle>
);

const Person = () => <path d="M7 0l2 6 5 10-7-5-7 5L5 6z" />;

function StatusBar() {
  return (
    <footer className="flex h-[34px] items-center border-b border-[#1c9ad6] bg-[#222933] pr-[3px] pb-[3px] text-[11px] text-[#d5d8dc]">
      <button aria-label="Menü" className="ml-[19px] text-white">
        <Bars />
      </button>
      <button className="ml-3 h-6 bg-[#3b4453] pr-[13px] pl-[14px] font-bold text-white [clip-path:polygon(9px_0,100%_0,calc(100%_-_9px)_100%,0_100%)]">
        Modell
      </button>
      <button className="ml-3">Elrendezés1</button>
      <Slash />
      <button>Elrendezés2</button>
      <Slash />
      <button aria-label="Új elrendezés" className="text-white">
        <Plus />
      </button>
      <Slash />

      <div className="ml-auto flex gap-[3px]">
        <Group>
          <button className="w-[53px] text-[12px]">MODELL</button>
        </Group>
        <Group>
          <Toggle label="Háló">
            <Icon>
              <path d="M4.500 0v16M8.500 0v16M12.500 0v16M0 4.500h16M0 8.500h16M0 12.500h16" stroke="currentColor" fill="none" />
            </Icon>
          </Toggle>
          <Toggle label="Raszter" className="w-[25px]">
            <Icon>
              <path d="M2 3h14M2 8h14M2 13h14" stroke="currentColor" strokeWidth="2" strokeDasharray="2 3" />
            </Icon>
          </Toggle>
          <Menu label="Raszter beállításai" />
        </Group>
        <Group>
          <Toggle label="Orto mód" className="w-[25px]">
            <Icon>
              <path d="M1.500 0v14.500H16M2 9.500h4v5" stroke="currentColor" fill="none" />
            </Icon>
          </Toggle>
          <Toggle label="Poláris" on>
            <Icon>
              <circle cx="7" cy="9" r="5.500" fill="none" stroke="currentColor" strokeWidth="1.300" />
              <path d="M7 9h9M7 9l7-8M9 4q2 2 2 5" fill="none" stroke="currentColor" strokeWidth="1.300" />
            </Icon>
          </Toggle>
          <Menu label="Poláris beállításai" />
          <Toggle label="Izometrikus">
            <Icon>
              <path d="M8.500 0v16" stroke="#46a06e" strokeWidth="1.500" />
              <path d="M2 1l13 14" stroke="#e0505a" strokeWidth="1.300" />
              <path d="M7 7h3v3H7z" />
            </Icon>
          </Toggle>
          <Menu label="Izometrikus beállításai" />
        </Group>
        <Group>
          <Toggle label="Követés" on>
            <Icon>
              <path d="M15 1L2 14h14" stroke="currentColor" fill="none" strokeWidth="1.500" />
            </Icon>
          </Toggle>
          <span className="w-[2px] self-stretch bg-[#222933]" />
          <Toggle label="Tárgyraszter" on>
            <Icon>
              <path d="M.5.500h5v4h-5zM8 2.500h6.500v12H2.500V7" stroke="currentColor" fill="none" strokeWidth="1.300" />
            </Icon>
          </Toggle>
          <Menu label="Tárgyraszter beállításai" />
        </Group>
        <Group>
          <Toggle label="Feliratlépték láthatósága" on>
            <Icon>
              <Person />
              <circle cx="13" cy="3" r="2" fill="none" stroke="currentColor" />
            </Icon>
          </Toggle>
          <Toggle label="Automatikus lépték" className="w-[25px]">
            <Icon>
              <Person />
              <path d="M13 0l-3 4h2l-1 4 4-5h-2z" />
            </Icon>
          </Toggle>
          <Toggle label="Lépték">
            <Icon>
              <Person />
            </Icon>
          </Toggle>
          <button className="pl-1">1:1</button>
          <Menu label="Léptéklista" />
        </Group>
        <Group>
          <Toggle label="Munkaterület">
            <Icon>
              <Gear x={8} y={8} r={8} />
            </Icon>
          </Toggle>
          <Menu label="Munkaterületek" />
        </Group>
        <Group>
          <Toggle label="Hozzáadás">
            <Icon>
              <path d="M7 0h2v7h7v2H9v7H7V9H0V7h7z" />
            </Icon>
          </Toggle>
        </Group>
        <Group>
          <Toggle label="Objektumok elkülönítése">
            <Icon>
              <path d="M1 1h5v5H1zM4 15l3-5 3 5z" fill="none" stroke="currentColor" strokeWidth="1.300" />
              <circle cx="12.500" cy="6.500" r="2.500" fill="none" stroke="currentColor" strokeWidth="1.300" />
            </Icon>
          </Toggle>
        </Group>
        <Group>
          <Toggle label="Grafikus teljesítmény">
            <Icon>
              <path d="M4 1h7l4 4v6H4z" fill="#2f6fc4" />
              <path d="M0 9h6v6H0z" fill="#f0a828" />
              <path d="M3 0v7M0 3h6" stroke="#fff" />
              <path d="M7 11l3 4 6-7" stroke="#59b53c" strokeWidth="2.500" fill="none" />
            </Icon>
          </Toggle>
        </Group>
        <Group>
          <Toggle label="Tiszta képernyő">
            <Icon>
              <path d="M.5 2.500h15v12H.5z" fill="none" stroke="currentColor" />
              <path d="M9 8l3-3M7 9l-3 3M9.500 5h3v3M3.500 9v3h3" fill="none" stroke="currentColor" strokeWidth="1.300" />
            </Icon>
          </Toggle>
        </Group>
        <Group>
          <Toggle label="Testreszabás">
            <Bars />
          </Toggle>
        </Group>
      </div>
    </footer>
  );
}

function Bars() {
  return (
    <Icon>
      <path d="M0 2h16v2H0zM0 7h16v2H0zM0 12h16v2H0z" />
    </Icon>
  );
}

function Plus() {
  return (
    <Icon>
      <path d="M7 1h2v6h6v2H9v6H7V9H1V7h6z" />
    </Icon>
  );
}

function Slash() {
  return (
    <svg width="24" height="18" viewBox="0 0 24 18" fill="none" stroke="#4d5563" className="shrink-0" aria-hidden="true">
      <path d="M15 1L9 17" />
    </svg>
  );
}

export default function App() {
  return (
    <div className="flex min-h-screen flex-col overflow-hidden bg-[#222933] font-['Open_Sans','Noto_Sans',sans-serif]">
      <nav className="flex h-[22px] items-end pl-[6px] text-[11px] text-[#c3c7cc]">
        {menuTabs.map((tab) => (
          <button
            key={tab}
            className={`h-5 px-[10px] whitespace-nowrap ${tab === "Kezelés" ? "bg-[#3b4453] text-white" : ""}`}
          >
            {tab}
          </button>
        ))}
        <button aria-label="Szalag kis méretűre" className="ml-[30px] flex h-[18px] items-center gap-1">
          <span className="grid h-2 w-[15px] place-items-center bg-[#c3c7cc] text-[#222933]">
            <Caret className="h-[3px] w-[5px] rotate-180" />
          </span>
          <Caret className="h-[3px] w-[5px]" />
        </button>
      </nav>

      <Ribbon />

      <div className="flex h-[27px] items-end text-[11px] text-[#e4e6e9]">
        <button aria-label="Menü" className="ml-[19px] flex h-6 items-center text-white">
          <Bars />
        </button>
        <div className="ml-[2px] flex h-6 items-center">
          <Slash />
          <button>Kezdés</button>
          <Slash />
          <button>Rajz1*</button>
        </div>
        <div className="ml-[18px] flex h-6 items-center bg-[#3b4453] pr-[10px] pl-4 [clip-path:polygon(10px_0,100%_0,calc(100%_-_9px)_100%,0_100%)]">
          <button className="font-bold text-white">Floor Plan Sample*</button>
          <button aria-label="Lap bezárása" className="ml-[6px] text-[#aeb3bb]">
            <X size={11} strokeWidth={4} />
          </button>
        </div>
        <div className="ml-2 flex h-6 items-center text-white">
          <button aria-label="Új rajz">
            <Plus />
          </button>
          <Slash />
        </div>
      </div>
      <div className="mx-[3px] h-1 bg-[#3b4453]" />

      <main className="relative mx-[3px] min-h-[670px] flex-1 overflow-hidden bg-black">
        <FloorPlan />
        <p className="absolute top-[6px] left-[3px] text-[11px] leading-[18px] text-[#dcdcdc]">[−][Felül][2D drótváz]</p>

        <div className="absolute top-[9px] right-[9px] flex gap-2 text-[#e2e2e2]">
          <button aria-label="Kis méret">
            <Icon size={12}>
              <path d="M1 8h10v3H1z" />
            </Icon>
          </button>
          <button aria-label="Előző méret">
            <Icon size={12}>
              <path fillRule="evenodd" d="M4 1h8v8h-2V3H4zM1 4h8v8H1zM3 6v4h4V6z" />
            </Icon>
          </button>
          <button aria-label="Bezárás">
            <Icon size={12}>
              <path d="M2 2l8 9M10 2l-8 9" stroke="currentColor" strokeWidth="2.500" />
            </Icon>
          </button>
        </div>
        <ViewCube />
        <button className="absolute top-[185px] right-[45px] flex h-[17px] w-[65px] items-center justify-between rounded-[4px] border-2 border-[#8f8fa0] bg-[#b6b6c8] px-[2px] text-[9px] text-[#3a3a44]">
          Névtelen
          <svg width="9" height="6" viewBox="0 0 9 6" fill="none" stroke="#dedee8" aria-hidden="true">
            <path d="M1 .5h7L4.500 5z" />
          </svg>
        </button>
        <NavBar />

        <div className="absolute bottom-0 left-[503px] flex h-[25px] w-[592px]">
          <div className="flex w-[57px] items-center gap-[6px] bg-[#3e3e3e] pl-[3px] text-[#c6c6c6]">
            <svg width="5" height="17" viewBox="0 0 5 17" aria-hidden="true">
              <path d="M1 0v17M4 0v17" stroke="currentColor" strokeWidth="2" strokeDasharray="2 1" />
            </svg>
            <button aria-label="Bezárás">
              <X size={12} strokeWidth={3} />
            </button>
            <button aria-label="Testreszabás">
              <svg width="17" height="17" viewBox="0 0 17 17" fill="currentColor">
                <path d="M1 13l7-7a4.500 4.500 0 0 1 6-5l-3 3 1 2 2 1 3-3a4.500 4.500 0 0 1-6 6l-7 6q-3 1-3-3z" />
              </svg>
            </button>
          </div>
          <div className="flex flex-1 items-center bg-[#c4c4c4]/90 px-1 pt-px text-black">
            <svg width="27" height="14" viewBox="0 0 27 14" aria-hidden="true">
              <path d="M.5 1.500h15v11H.5z" fill="#d8d8d8" stroke="#444" />
              <path d="M1 3h14" stroke="#444" strokeWidth="2" />
              <path d="M3 6l2 2-2 2M7 10h4" stroke="#222" fill="none" />
              <path d="M19 5h7l-3.500 4z" fill="#333" />
            </svg>
            <label htmlFor="command" className="pt-[3px] font-['Liberation_Mono',monospace] text-[12px] whitespace-pre">
              {"Lap száma <0>: "}
            </label>
            <input
              id="command"
              defaultValue="0"
              className="min-w-0 flex-1 bg-transparent pt-[3px] font-['Liberation_Mono',monospace] text-[12px] outline-none"
            />
            <button aria-label="Előzmények">
              <Caret className="h-1 w-[6px] rotate-180 text-[#333]" />
            </button>
          </div>
        </div>

        <PurgeDialog />
      </main>

      <div className="h-1 bg-[#3b4453]" />
      <StatusBar />
    </div>
  );
}
